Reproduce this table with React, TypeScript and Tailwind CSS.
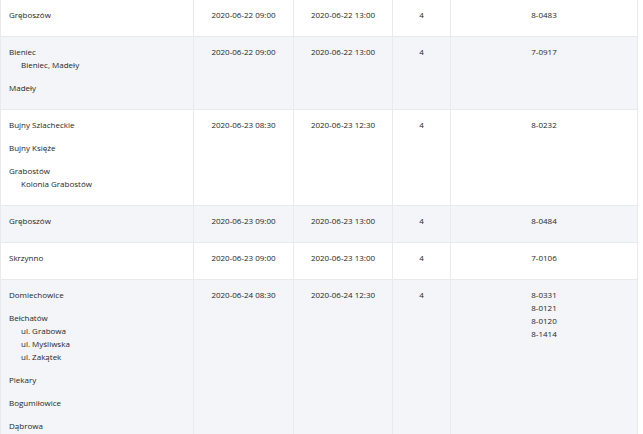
type Place = { name: string; sub?: string[] }

type Row = {
  places: Place[]
  start: string
  end: string
  count: number
  codes: string[]
}

const rows: Row[] = [
  { places: [{ name: "Gręboszów" }], start: "2020-06-22 09:00", end: "2020-06-22 13:00", count: 4, codes: ["8-0483"] },
  {
    places: [{ name: "Bieniec", sub: ["Bieniec, Madeły"] }, { name: "Madeły" }],
    start: "2020-06-22 09:00",
    end: "2020-06-22 13:00",
    count: 4,
    codes: ["7-0917"],
  },
  {
    places: [
      { name: "Bujny Szlacheckie" },
      { name: "Bujny Księże" },
      { name: "Grabostów", sub: ["Kolonia Grabostów"] },
    ],
    start: "2020-06-23 08:30",
    end: "2020-06-23 12:30",
    count: 4,
    codes: ["8-0232"],
  },
  { places: [{ name: "Gręboszów" }], start: "2020-06-23 09:00", end: "2020-06-23 13:00", count: 4, codes: ["8-0484"] },
  { places: [{ name: "Skrzynno" }], start: "2020-06-23 09:00", end: "2020-06-23 13:00", count: 4, codes: ["7-0106"] },
  {
    places: [
      { name: "Domiechowice" },
      { name: "Bełchatów", sub: ["ul. Grabowa", "ul. Myśliwska", "ul. Zakątek"] },
      { name: "Piekary" },
      { name: "Bogumiłowice" },
      { name: "Dąbrowa" },
    ],
    start: "2020-06-24 08:30",
    end: "2020-06-24 12:30",
    count: 4,
    codes: ["8-0331", "8-0121", "8-0120", "8-1414"],
  },
]

const cell = "border border-[#e9eaee] align-top pt-[8px] pb-[15px] leading-[13px]"

export default function App() {
  return (
    <div className="min-h-screen bg-white pr-[5px] text-[8px] text-[#262626] font-['Open_Sans',sans-serif]">
      <table className="w-[638px] border-collapse table-fixed -mt-[2px]">
        <colgroup>
          <col className="w-[193px]" />
          <col className="w-[100px]" />
          <col className="w-[99px]" />
          <col className="w-[58px]" />
          <col />
        </colgroup>
        <tbody>
          {rows.map((r, i) => (
            <tr key={i} className={i % 2 === 1 ? "bg-[#f4f5f8]" : "bg-white"}>
              <td className={`${cell} pl-[8px] ${i === 0 ? "pt-[9px]" : ""}`}>
                <div className="flex flex-col gap-[10px]">
                  {r.places.map((p) => (
                    <div key={p.name}>
                      <div>{p.name}</div>
                      {p.sub?.map((s) => (
                        <div key={s} className="pl-[12px]">
                          {s}
                        </div>
                      ))}
                    </div>
                  ))}
                </div>
              </td>
              <td className={`${cell} text-center ${i === 0 ? "pt-[9px]" : ""}`}>{r.start}</td>
              <td className={`${cell} text-center ${i === 0 ? "pt-[9px]" : ""}`}>{r.end}</td>
              <td className={`${cell} text-center ${i === 0 ? "pt-[9px]" : ""}`}>{r.count}</td>
              <td className={`${cell} text-center ${i === 0 ? "pt-[9px]" : ""}`}>
                {r.codes.map((c) => (
                  <div key={c}>{c}</div>
                ))}
              </td>
            </tr>
          ))}
        </tbody>
      </table>
    </div>
  )
}
